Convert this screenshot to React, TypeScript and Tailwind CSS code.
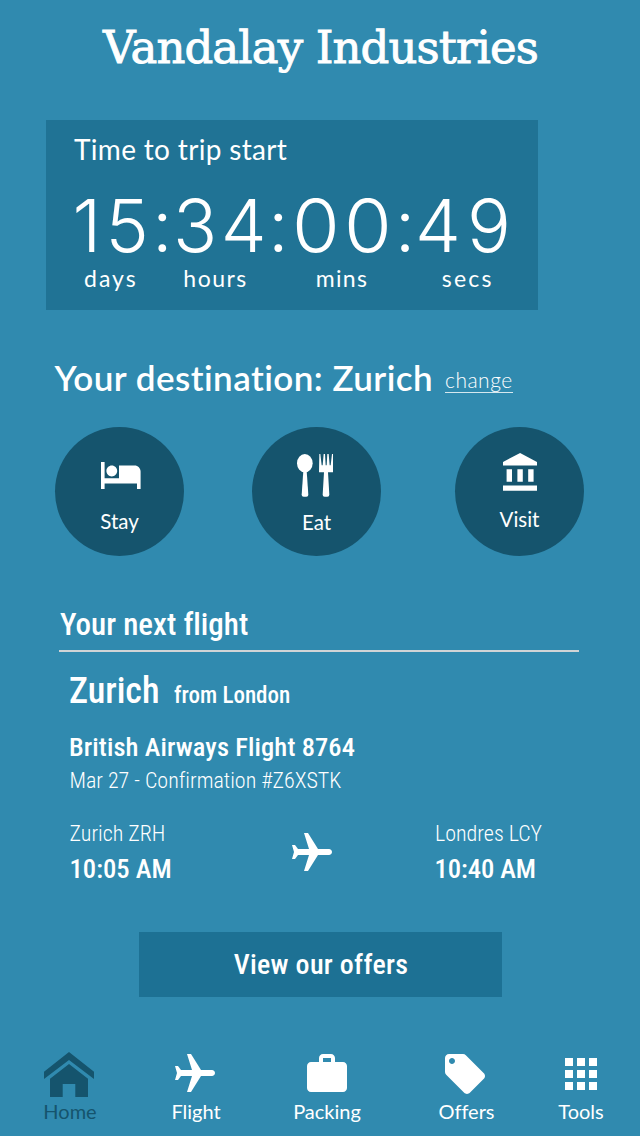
import type { ReactNode } from "react";

const lato = "font-['Lato','Open_Sans',sans-serif] [font-variant-ligatures:none]";
const condensed = "font-['Roboto','Open_Sans',sans-serif] [font-stretch:75%]";

function PlaneIcon() {
  return (
    <svg viewBox="0 0 24 24" className="size-12 shrink-0 rotate-90 fill-white">
      <path d="M21 16v-2l-8-5V3.5c0-.83-.67-1.5-1.5-1.5S10 2.67 10 3.5V9l-8 5v2l8-2.5V19l-2 1.5V22l3.5-1 3.5 1v-1.5L13 19v-5.5l8 2.5z" />
    </svg>
  );
}

function BedIcon() {
  return (
    <svg viewBox="1 5 22 15" className="ml-[3px] h-[27px] w-[39.6px] fill-white">
      <path d="M7 13c1.66 0 3-1.34 3-3S8.66 7 7 7s-3 1.34-3 3 1.34 3 3 3zm12.7-6H11v7H3V5H1v15h2v-3h18v3h2v-9.7c0-1.8-1.5-3.3-3.3-3.3z" />
    </svg>
  );
}

function CutleryIcon() {
  return (
    <svg viewBox="37 28 108 128" className="mr-[3px] h-[42.7px] w-9 fill-white">
      <ellipse cx="60.5" cy="55.5" rx="23.5" ry="27.5" />
      <path d="M56 78h10l5 72q0 6-6 6h-8q-6 0-6-6z" />
      <path d="M104 28h3l4 34h3l3-34h4l2 34h3l2-34h4l3 34h3l4-34h3l1 55h-16l4 67q0 6-6 6h-8q-6 0-6-6l4-67h-15z" />
    </svg>
  );
}

function MuseumIcon() {
  return (
    <svg viewBox="2 1 19 21" className="ml-px h-[37.8px] w-[34.2px] fill-white">
      <path d="M4 10v7h3v-7H4zm6 0v7h3v-7h-3zM2 22h19v-3H2v3zm14-12v7h3v-7h-3zm-4.5-9L2 6v2h19V6l-9.5-5z" />
    </svg>
  );
}

function HomeIcon() {
  return (
    <svg viewBox="0 0 50 48" className="mr-[2px] h-12 w-[50px] fill-[#15546d]">
      <path d="M25 2l25 19.7v7.3L25 10 0 29v-7.3zM25 14l19 14.7V47H31.3V34H18.7v13H6V28.7z" />
    </svg>
  );
}

function BagIcon() {
  return (
    <svg viewBox="0 0 24 24" className="size-12 fill-white">
      <path d="M20 6h-4V4c0-1.11-.89-2-2-2h-4c-1.11 0-2 .89-2 2v2H4c-1.11 0-1.99.89-1.99 2L2 19c0 1.11.89 2 2 2h16c1.11 0 2-.89 2-2V8c0-1.11-.89-2-2-2zm-6 0h-4V4h4v2z" />
    </svg>
  );
}

function TagIcon() {
  return (
    <svg viewBox="0 0 24 24" className="mr-1 size-12 fill-white">
      <path d="M21.41 11.58l-9-9C12.05 2.22 11.55 2 11 2H4c-1.1 0-2 .9-2 2v7c0 .55.22 1.05.59 1.42l9 9c.36.36.86.58 1.41.58.55 0 1.05-.22 1.41-.59l7-7c.37-.36.59-.86.59-1.41 0-.55-.23-1.06-.59-1.42zM5.5 7C4.67 7 4 6.33 4 5.5S4.67 4 5.5 4 7 4.67 7 5.5 6.33 7 5.5 7z" />
    </svg>
  );
}

function GridIcon() {
  return (
    <svg viewBox="0 0 24 24" className="size-12 fill-white">
      <path d="M4 8h4V4H4v4zm6 12h4v-4h-4v4zm-6 0h4v-4H4v4zm0-6h4v-4H4v4zm6 0h4v-4h-4v4zm6-10v4h4V4h-4zm-6 4h4V4h-4v4zm6 6h4v-4h-4v4zm0 6h4v-4h-4v4z" />
    </svg>
  );
}

function Circle({ icon, label, className }: { icon: ReactNode; label: string; className: string }) {
  return (
    <button className={`flex size-[129px] flex-col items-center rounded-full bg-[#15546d] text-[20.5px] leading-6 ${className}`}>
      {icon}
      {label}
    </button>
  );
}

function NavItem({ icon, label, className }: { icon: ReactNode; label: string; className: string }) {
  return (
    <a className={`flex flex-col items-center text-[20px] leading-6 ${className}`}>
      {icon}
      <span className="mt-px">{label}</span>
    </a>
  );
}

export default function App() {
  return (
    <div className={`flex h-[1136px] w-[640px] flex-col overflow-hidden bg-[#308aaf] text-white ${lato}`}>
      <h1 className="flex h-[94px] items-center justify-center pt-px pl-px font-['DejaVu_Serif',serif] text-[45px] tracking-[-0.9px] [-webkit-text-stroke:0.9px_white]">
        Vandalay Industries
      </h1>

      <section className="mt-[26px] ml-[46px] h-[190px] w-[492px] bg-[#207395] pt-[13px]">
        <h2 className="pl-7 text-[28px] leading-[33px] tracking-[0.33px]">Time to trip start</h2>
        <div className="mt-[23px] grid grid-cols-[79.6px_21px_95px_24px_102.7px_20.3px_93px] pl-[26.4px] font-['Inter','Roboto',sans-serif] text-[73px] leading-[73px] font-light">
          <span className="tracking-[4.5px]">15</span>
          <span>:</span>
          <span className="tracking-[3.5px]">34</span>
          <span>:</span>
          <span className="origin-left scale-x-[1.06] tracking-[4px]">00</span>
          <span>:</span>
          <span className="tracking-[6px]">49</span>
        </div>
        <div className="mt-1 grid grid-cols-[99.3px_132.5px_126px_80px] pl-[38px] text-[23px] leading-6 tracking-[1.5px]">
          <span className="tracking-[2px]">days</span>
          <span>hours</span>
          <span className="tracking-[1.3px]">mins</span>
          <span className="tracking-[2.2px]">secs</span>
        </div>
      </section>

      <div className="mt-[47px] flex pl-[54.5px]">
        <h2 className="w-[390.5px] text-[35px] leading-10 font-semibold tracking-[0.46px] whitespace-nowrap">Your destination: Zurich</h2>
        <a className="mt-[10.5px] h-[25px] border-b border-white/80 text-[21px] leading-6 font-light tracking-[0.5px]">change</a>
      </div>

      <div className="mt-[30px] flex pl-[55px]">
        <Circle icon={<BedIcon />} label={"Stay"} className="gap-[20px] pt-[35px]" />
        <Circle icon={<CutleryIcon />} label={"Eat"} className="ml-[68px] gap-[13px] pt-[27.3px]" />
        <Circle icon={<MuseumIcon />} label={"Visit"} className="ml-[74px] gap-[16.2px] pt-[26px]" />
      </div>

      <section className={condensed}>
        <h2 className="mt-[51px] ml-[59px] w-[520px] border-b-2 border-[#d0d4d6] pb-[7px] pl-px text-[31px] leading-9 font-medium">
          Your next flight
        </h2>
        <div className="pl-[69.5px]">
          <p className="mt-[17px] -ml-[0.5px] flex h-[44px] items-baseline gap-[14.5px] text-[36px] leading-[44px] font-medium">
            Zurich <span className="text-[23px] leading-none">from London</span>
          </p>
          <p className="mt-[18px] -ml-[0.5px] text-[26.5px] leading-8 font-medium tracking-[0.1px]">British Airways Flight 8764</p>
          <p className="mt-[2.5px] text-[22px] leading-[30px] font-light">Mar 27 - Confirmation #Z6XSTK</p>
          <div className="mt-[23px] grid h-[67.5px] grid-cols-[219px_146.5px_auto] text-[22px] leading-[30px] font-light">
            <div>
              <p>Zurich ZRH</p>
              <p className="mt-[3px] text-[26.7px] leading-[34px] font-medium">10:05 AM</p>
            </div>
            <div className="-ml-px pt-[10.5px]">
              <PlaneIcon />
            </div>
            <div>
              <p>Londres LCY</p>
              <p className="mt-[3px] -ml-[0.5px] text-[26.7px] leading-[34px] font-medium tracking-[-0.1px]">10:40 AM</p>
            </div>
          </div>
        </div>
        <button className="mt-[46px] ml-[139px] flex h-[65px] w-[363px] items-center justify-center bg-[#1d7194] pl-px text-[28px] font-medium tracking-[0.3px]">
          View our offers
        </button>
      </section>

      <nav className="mt-[53px] flex">
        <NavItem icon={<HomeIcon />} label="Home" className="w-[140px] pt-px text-[#15546d] [&>svg]:-mt-px" />
        <NavItem icon={<PlaneIcon />} label="Flight" className="w-[112px] [&>svg]:mb-px [&>svg]:-mt-px [&>svg]:translate-y-px [&>svg]:mr-[2px]" />
        <NavItem icon={<BagIcon />} label="Packing" className="w-[150px]" />
        <NavItem icon={<TagIcon />} label="Offers" className="w-[129px]" />
        <NavItem icon={<GridIcon />} label="Tools" className="w-[100px]" />
      </nav>
    </div>
  );
}
